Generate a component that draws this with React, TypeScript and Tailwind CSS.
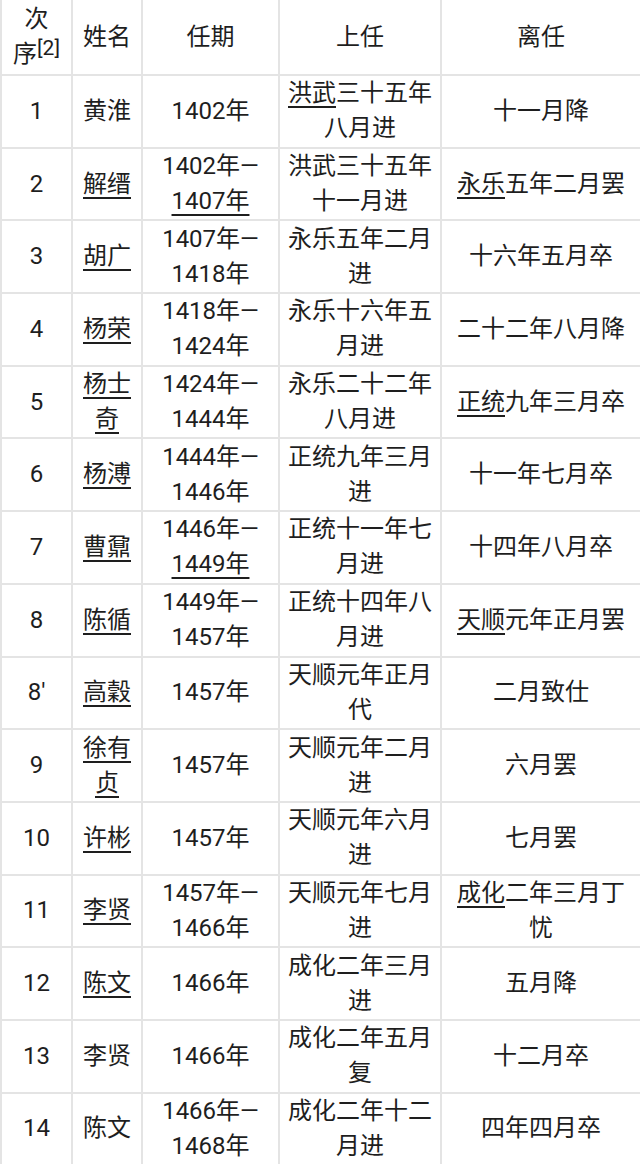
// Ming dynasty grand secretaries table (首辅 list)

type Cell = string | { u: string; rest?: string; pre?: string };

interface Row {
    no: string;
    name: Cell;
    term: Cell;
    start: Cell;
    end: Cell;
}

const ROWS: Row[] = [
    { no: '1', name: '黄淮', term: '1402年', start: { u: '洪武', rest: '三十五年八月进' }, end: '十一月降' },
    { no: '2', name: { u: '解缙' }, term: { pre: '1402年—', u: '1407年' }, start: '洪武三十五年十一月进', end: { u: '永乐', rest: '五年二月罢' } },
    { no: '3', name: { u: '胡广' }, term: '1407年—1418年', start: '永乐五年二月进', end: '十六年五月卒' },
    { no: '4', name: { u: '杨荣' }, term: '1418年—1424年', start: '永乐十六年五月进', end: '二十二年八月降' },
    { no: '5', name: { u: '杨士奇' }, term: '1424年—1444年', start: '永乐二十二年八月进', end: { u: '正统', rest: '九年三月卒' } },
    { no: '6', name: { u: '杨溥' }, term: '1444年—1446年', start: '正统九年三月进', end: '十一年七月卒' },
    { no: '7', name: { u: '曹鼐' }, term: { pre: '1446年—', u: '1449年' }, start: '正统十一年七月进', end: '十四年八月卒' },
    { no: '8', name: { u: '陈循' }, term: '1449年—1457年', start: '正统十四年八月进', end: { u: '天顺', rest: '元年正月罢' } },
    { no: '8′', name: { u: '高穀' }, term: '1457年', start: '天顺元年正月代', end: '二月致仕' },
    { no: '9', name: { u: '徐有贞' }, term: '1457年', start: '天顺元年二月进', end: '六月罢' },
    { no: '10', name: { u: '许彬' }, term: '1457年', start: '天顺元年六月进', end: '七月罢' },
    { no: '11', name: { u: '李贤' }, term: '1457年—1466年', start: '天顺元年七月进', end: { u: '成化', rest: '二年三月丁忧' } },
    { no: '12', name: { u: '陈文' }, term: '1466年', start: '成化二年三月进', end: '五月降' },
    { no: '13', name: '李贤', term: '1466年', start: '成化二年五月复', end: '十二月卒' },
    { no: '14', name: '陈文', term: '1466年—1468年', start: '成化二年十二月进', end: '四年四月卒' },
];

function Text({ c }: { c: Cell }) {
    if (typeof c === 'string') return <>{c}</>;
    return (
        <>
            {c.pre}
            <span className="underline decoration-[1.5px] underline-offset-[5px]">{c.u}</span>
            {c.rest}
        </>
    );
}

const td = 'border-2 border-[#e4e4e4] px-[6px] text-center align-middle';

export default function App() {
    return (
        <div
            className="w-[640px] overflow-hidden bg-white text-[24px] leading-[35px] text-[#1e1e1e]"
            style={{ fontFamily: 'Roboto, "Noto Sans CJK SC", sans-serif' }}
        >
            <table className="w-[640px] table-fixed border-collapse">
                <colgroup>
                    <col className="w-[71px]" />
                    <col className="w-[70px]" />
                    <col className="w-[137px]" />
                    <col className="w-[162px]" />
                    <col className="w-[200px]" />
                </colgroup>
                <thead>
                    <tr className="h-[75px]">
                        <th className={`${td} border-t-0 px-[4px] font-normal`}>
                            次<br />
                            序<sup className="top-[-0.35em] text-[21px]">[2]</sup>
                        </th>
                        <th className={`${td} border-t-0 font-normal`}>姓名</th>
                        <th className={`${td} border-t-0 font-normal`}>任期</th>
                        <th className={`${td} border-t-0 font-normal`}>上任</th>
                        <th className={`${td} border-t-0 font-normal`}>离任</th>
                    </tr>
                </thead>
                <tbody>
                    {ROWS.map((r) => (
                        <tr key={r.no} className="h-[72.7px]">
                            <td className={td}>{r.no}</td>
                            <td className={td}>
                                <Text c={r.name} />
                            </td>
                            <td className={td}>
                                <Text c={r.term} />
                            </td>
                            <td className={td}>
                                <Text c={r.start} />
                            </td>
                            <td className={`${td} px-[8px]`}>
                                <Text c={r.end} />
                            </td>
                        </tr>
                    ))}
                </tbody>
            </table>
        </div>
    );
}
